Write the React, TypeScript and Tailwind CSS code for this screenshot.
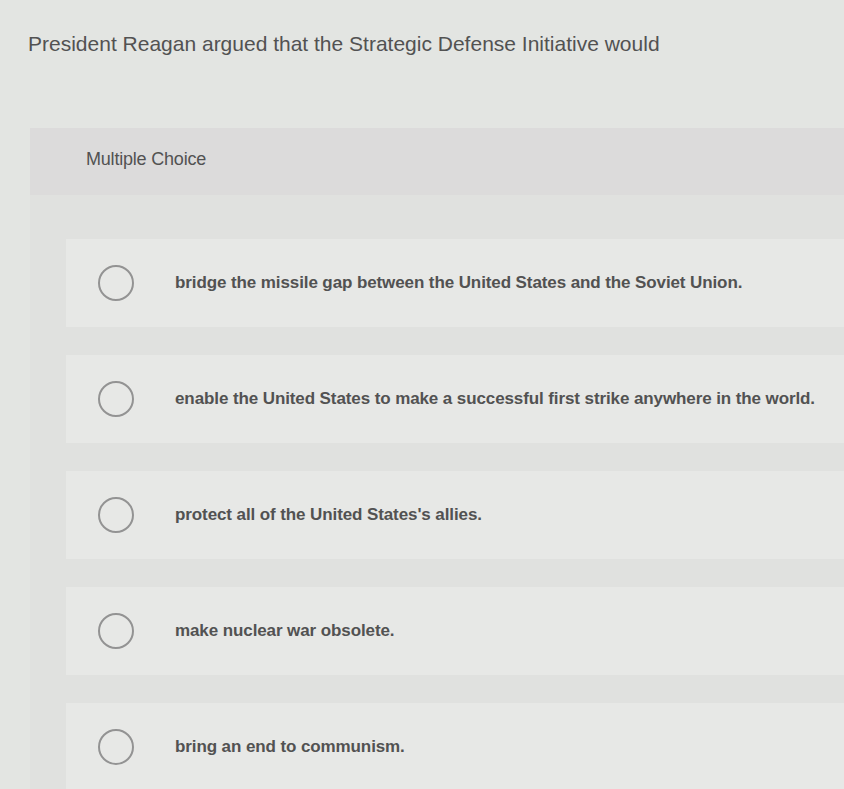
const choices = [
  "bridge the missile gap between the United States and the Soviet Union.",
  "enable the United States to make a successful first strike anywhere in the world.",
  "protect all of the United States's allies.",
  "make nuclear war obsolete.",
  "bring an end to communism.",
];

function Choice({ label }: { label: string }) {
  return (
    <div className="flex h-[88px] items-center bg-[#e7e8e6] pl-[32px]">
      <span className="h-[36px] w-[36px] shrink-0 rounded-full border-2 border-[#939393]" />
      <span className="ml-[41px] text-[17px] font-bold tracking-[-0.1px] text-[#525252]">
        {label}
      </span>
    </div>
  );
}

export default function App() {
  return (
    <div className="h-[789px] w-[844px] overflow-hidden bg-[#e3e5e2] font-['Liberation_Sans',Arial,sans-serif]">
      <div className="px-[28px] pt-[30px]">
        <p className="text-[21px] leading-[28px] text-[#525252]">
          President Reagan argued that the Strategic Defense Initiative would
        </p>
      </div>

      <div className="ml-[30px] mt-[70px] bg-[#dcdbdb]">
        <div className="flex h-[67px] items-center pl-[56px] pb-[4px]">
          <span className="text-[18px] tracking-[-0.2px] text-[#525252]">Multiple Choice</span>
        </div>
        <div className="flex flex-col gap-[28px] bg-[#e0e1df] pb-[30px] pl-[36px] pt-[44px]">
          {choices.map((c) => (
            <Choice key={c} label={c} />
          ))}
        </div>
      </div>
    </div>
  );
}
